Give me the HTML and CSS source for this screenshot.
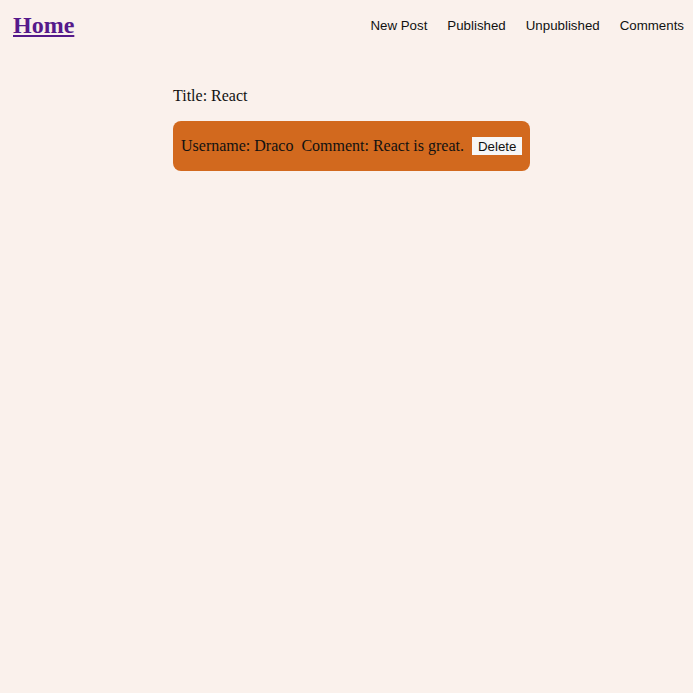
FILE: index.html
```html
<!DOCTYPE html>
<html>
<head>
<meta charset="utf-8">
<link rel="stylesheet" href="styles.css">
</head>
<body>
<header class="topbar">
  <a class="home" href="#">Home</a>
  <nav class="nav">
    <a href="#">New Post</a>
    <a href="#">Published</a>
    <a href="#">Unpublished</a>
    <a href="#">Comments</a>
  </nav>
</header>
<main class="content">
  <p class="title">Title: React</p>
  <div class="comment">
    <span class="user">Username: Draco</span>
    <span class="text">Comment: React is great.</span>
    <button class="delete">Delete</button>
  </div>
</main>
</body>
</html>
```
FILE: styles.css
```css
html, body {
  margin: 0;
  padding: 0;
  background: #faf1ec;
  font-family: "Liberation Serif", "Times New Roman", serif;
  font-size: 16px;
  color: #111;
}
.topbar {
  display: flex;
  justify-content: space-between;
  align-items: center;
  height: 50px;
  padding: 0 9px 0 13px;
}
.home {
  font-size: 24px;
  font-weight: bold;
  color: #551a8b;
  text-decoration: underline;
}
.nav {
  display: flex;
  gap: 20px;
  font-family: "Liberation Sans", Arial, sans-serif;
  font-size: 13.3px;
}
.nav a {
  color: #111;
  text-decoration: none;
}
.content {
  margin-left: 173px;
  padding-top: 37px;
}
.title {
  margin: 0 0 16px 0;
  line-height: 18px;
}
.comment {
  display: inline-flex;
  align-items: center;
  background: #d2691e;
  border-radius: 8px;
  padding: 16px 8px;
  height: 18px;
}
.user {
  margin-right: 8px;
}
.text {
  margin-right: 8px;
}
.delete {
  font-family: "Liberation Sans", Arial, sans-serif;
  font-size: 13.3px;
  background: #f7f7f7;
  border: none;
  padding: 1px 6px;
  height: 18px;
  color: #111;
}
```
